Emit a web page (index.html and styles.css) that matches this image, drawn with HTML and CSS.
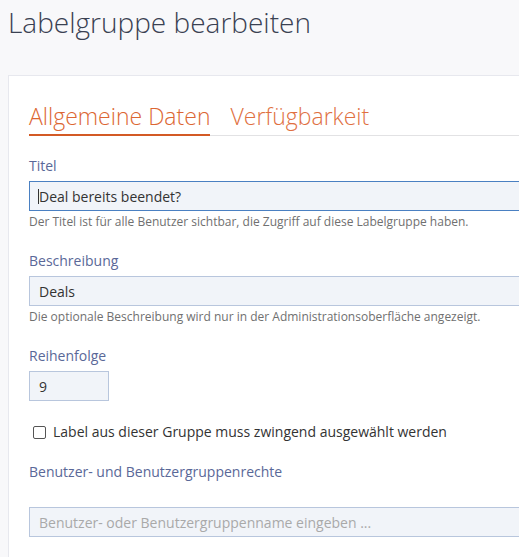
FILE: index.html
```html
<!DOCTYPE html>
<html lang="de">
<head>
<meta charset="utf-8">
<title>Labelgruppe bearbeiten</title>
<link rel="stylesheet" href="styles.css">
</head>
<body>
<div class="page">
  <h1 class="page-title">Labelgruppe bearbeiten</h1>
  <div class="card">
    <div class="tabs">
      <span class="tab active">Allgemeine Daten</span>
      <span class="tab">Verfügbarkeit</span>
    </div>
    <div class="group">
      <label class="label">Titel</label>
      <div class="field-wrap">
        <input class="field focused" type="text" value="Deal bereits beendet?">
        <span class="caret"></span>
      </div>
      <div class="help">Der Titel ist für alle Benutzer sichtbar, die Zugriff auf diese Labelgruppe haben.</div>
    </div>
    <div class="group">
      <label class="label">Beschreibung</label>
      <input class="field" type="text" value="Deals">
      <div class="help">Die optionale Beschreibung wird nur in der Administrationsoberfläche angezeigt.</div>
    </div>
    <div class="group">
      <label class="label">Reihenfolge</label>
      <input class="field small" type="text" value="9">
    </div>
    <label class="check-row">
      <input class="check" type="checkbox">
      <span>Label aus dieser Gruppe muss zwingend ausgewählt werden</span>
    </label>
    <div class="section-label">Benutzer- und Benutzergruppenrechte</div>
    <input class="field" type="text" placeholder="Benutzer- oder Benutzergruppenname eingeben ...">
  </div>
</div>
</body>
</html>
```
FILE: styles.css
```css
html, body {
  margin: 0;
  padding: 0;
  background: #f8f8fa;
  overflow: hidden;
}
body {
  font-family: "Open Sans", "Noto Sans", sans-serif;
  color: #333;
}
.page {
  padding-left: 8px;
}
.page-title {
  margin: 4px 0 35px 0;
  font-size: 28px;
  line-height: 36px;
  font-weight: 300;
  color: #3a4152;
}
.card {
  width: 600px;
  background: #fff;
  border: 1px solid #e7e8ee;
  padding: 24px 20px 30px 20px;
}
.tabs {
  display: flex;
  gap: 20px;
  border-bottom: 1px solid #e2e2e4;
}
.tab {
  font-size: 23px;
  line-height: 32px;
  font-weight: 300;
  color: #e0703f;
  padding-bottom: 2px;
  margin-bottom: -1px;
  border-bottom: 2px solid transparent;
}
.tab.active {
  color: #dc6632;
  border-bottom-color: #d35a25;
}
.group {
  display: flex;
  flex-direction: column;
}
.tabs + .group {
  margin-top: 20px;
}
.group + .group {
  margin-top: 21px;
}
.label {
  font-size: 14px;
  line-height: 20px;
  color: #5a6898;
  margin-bottom: 5px;
}
.field-wrap {
  position: relative;
}
.field {
  box-sizing: border-box;
  display: block;
  width: 100%;
  height: 30px;
  margin: 0;
  padding: 0 9px;
  border: 1px solid #b8c6dd;
  background: #f1f4f9;
  font-family: "Open Sans", "Noto Sans", sans-serif;
  font-size: 14px;
  color: #333;
  outline: none;
}
.field.focused {
  border-color: #4a80c2;
}
.field::placeholder {
  color: #a9a9a9;
}
.field.small {
  width: 80px;
}
.caret {
  position: absolute;
  left: 9px;
  top: 8px;
  width: 1px;
  height: 15px;
  background: #333;
}
.help {
  font-size: 12px;
  line-height: 16px;
  color: #707070;
  margin-top: 3px;
}
.check-row {
  display: flex;
  align-items: center;
  gap: 7px;
  margin-top: 21px;
  padding-left: 4px;
  font-size: 14px;
  line-height: 20px;
  color: #333;
}
.check {
  appearance: none;
  -webkit-appearance: none;
  box-sizing: border-box;
  width: 13px;
  height: 13px;
  margin: 1px 0 0 0;
  border: 1px solid #555;
  border-radius: 2px;
  background: #fff;
}
.section-label {
  margin-top: 20px;
  margin-bottom: 25px;
  font-size: 14px;
  line-height: 20px;
  color: #5a6898;
}
```
